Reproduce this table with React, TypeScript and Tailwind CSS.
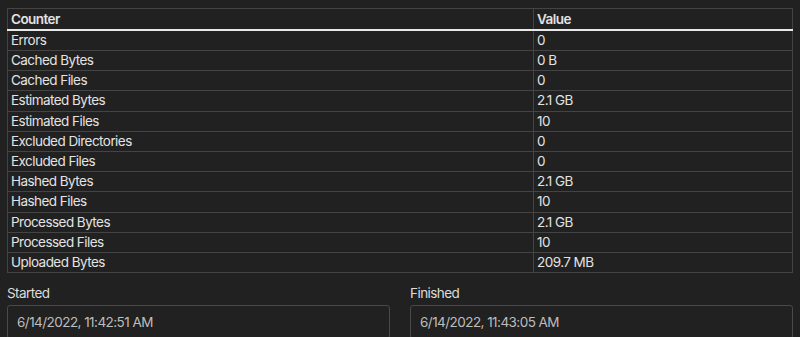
import React from "react";

const rows: [string, string][] = [
  ["Errors", "0"],
  ["Cached Bytes", "0 B"],
  ["Cached Files", "0"],
  ["Estimated Bytes", "2.1 GB"],
  ["Estimated Files", "10"],
  ["Excluded Directories", "0"],
  ["Excluded Files", "0"],
  ["Hashed Bytes", "2.1 GB"],
  ["Hashed Files", "10"],
  ["Processed Bytes", "2.1 GB"],
  ["Processed Files", "10"],
  ["Uploaded Bytes", "209.7 MB"],
];

export default function App() {
  return (
    <div
      className="w-[800px] h-[337px] overflow-hidden bg-[#212121] text-[#e3e3e3] text-[13.5px] tracking-[-0.55px] pt-[8px] px-[7px]"
      style={{ fontFamily: "Inter, 'Noto Sans', sans-serif" }}
    >
      <table className="w-full border-collapse border border-[#444444]">
        <thead>
          <tr className="h-[21px] border-b-2 border-[#e8e8e8]">
            <th className="w-[526px] text-left font-semibold px-[3px] py-0 border-r border-[#444444] leading-[20px]">
              Counter
            </th>
            <th className="text-left font-semibold px-[3px] py-0 leading-[20px]">Value</th>
          </tr>
        </thead>
        <tbody>
          {rows.map(([k, v]) => (
            <tr key={k} className="h-[20.2px] border-b border-[#444444]">
              <td className="px-[3px] py-0 border-r border-[#444444] leading-[19px]">{k}</td>
              <td className="px-[3px] py-0 leading-[19px]">{v}</td>
            </tr>
          ))}
        </tbody>
      </table>
      <div className="grid grid-cols-2 gap-[20px] mt-[11px]">
        <div className="flex flex-col">
          <div className="leading-[18px] text-[#dcdcdc]">Started</div>
          <div className="mt-[3px] h-[34px] border border-[#4a4a4a] rounded-[3px] px-[9px] flex items-center text-[#bdbdbd]">
            6/14/2022, 11:42:51 AM
          </div>
        </div>
        <div className="flex flex-col">
          <div className="leading-[18px] text-[#dcdcdc]">Finished</div>
          <div className="mt-[3px] h-[34px] border border-[#4a4a4a] rounded-[3px] px-[9px] flex items-center text-[#bdbdbd]">
            6/14/2022, 11:43:05 AM
          </div>
        </div>
      </div>
    </div>
  );
}
